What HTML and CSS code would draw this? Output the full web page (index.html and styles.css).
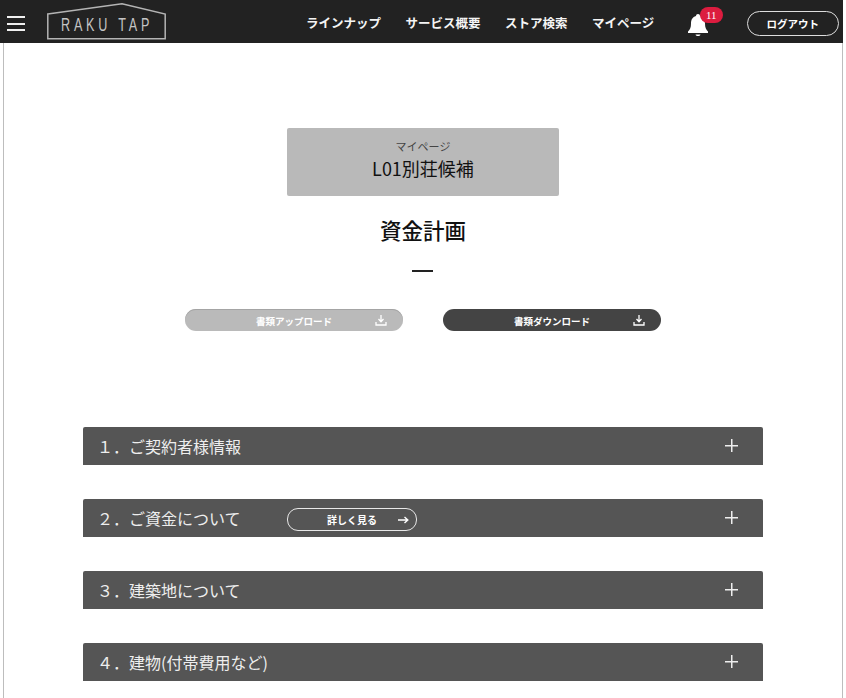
FILE: index.html
```html
<html lang="ja">
    <head>
        <title>資金計画</title>
        <link rel="stylesheet" href="styles.css">
    </head>
    <body>
        <header class="site-header">
            <div class="menu-icon"><span></span><span></span><span></span></div>
            <div class="logo">
                <svg width="119" height="37" viewBox="0 0 119 37">
                    <path d="M0.800 11 L75 0.800 L118.200 11 L118.200 35.800 L0.800 35.800 Z" fill="none" stroke="#b4b4b4" stroke-width="1.500"/>
                </svg>
                <span class="logo-text">RAKU TAP</span>
            </div>
            <nav class="site-nav">
                <a>ラインナップ</a>
                <a>サービス概要</a>
                <a>ストア検索</a>
                <a>マイページ</a>
            </nav>
            <div class="bell">
                <svg width="22" height="24" viewBox="0 0 22 24">
                    <path d="M11 1 C12.200 1 13 1.800 13 3 C16.600 4 18 7 18 10.500 C18 14.500 19 16.500 21 18.500 L21 20 L1 20 L1 18.500 C3 16.500 4 14.500 4 10.500 C4 7 5.400 4 9 3 C9 1.800 9.800 1 11 1 Z" fill="#fff"/>
                    <path d="M8.500 21.500 L13.500 21.500 C13 23.500 9 23.500 8.500 21.500 Z" fill="#fff"/>
                </svg>
                <span class="badge">11</span>
            </div>
            <a class="logout">ログアウト</a>
        </header>

        <main class="page">
            <div class="name-card">
                <p class="name-sub">マイページ</p>
                <p class="name-main">L01別荘候補</p>
            </div>
            <h1 class="page-title">資金計画</h1>
            <div class="title-bar"></div>

            <div class="doc-buttons">
                <a class="doc-btn doc-upload">
                    <span>書類アップロード</span>
                    <svg class="doc-icon" width="12" height="12" viewBox="0 0 12 12">
                        <path d="M6 1 L6 7.500 M3.500 5 L6 7.800 L8.500 5 M1 8 L1 11 L11 11 L11 8" fill="none" stroke="#fff" stroke-width="1.300"/>
                    </svg>
                </a>
                <a class="doc-btn doc-download">
                    <span>書類ダウンロード</span>
                    <svg class="doc-icon" width="12" height="12" viewBox="0 0 12 12">
                        <path d="M6 1 L6 7.500 M3.500 5 L6 7.800 L8.500 5 M1 8 L1 11 L11 11 L11 8" fill="none" stroke="#fff" stroke-width="1.300"/>
                    </svg>
                </a>
            </div>

            <section class="sections">
                <div class="section-bar">
                    <span class="section-title">１．ご契約者様情報</span>
                    <span class="plus"></span>
                </div>
                <div class="section-bar">
                    <span class="section-title section-title-short">２．ご資金について</span>
                    <a class="more-btn">
                        <span>詳しく見る</span>
                        <svg class="more-arrow" width="11" height="8" viewBox="0 0 11 8">
                            <path d="M0 4 L9.500 4 M6.500 1 L9.800 4 L6.500 7" fill="none" stroke="#fff" stroke-width="1.400"/>
                        </svg>
                    </a>
                    <span class="plus"></span>
                </div>
                <div class="section-bar">
                    <span class="section-title">３．建築地について</span>
                    <span class="plus"></span>
                </div>
                <div class="section-bar">
                    <span class="section-title">４．建物(付帯費用など)</span>
                    <span class="plus"></span>
                </div>
            </section>
        </main>
    </body>
</html>
```

FILE: styles.css
```css
html, body {
    height: 698px;
    overflow: hidden;
}

body {
    width: 843px;
    margin: 0;
    background-color: #fff;
    color: #111;
    font-family: "Noto Sans CJK JP", "Noto Sans", sans-serif;
}

p, h1 {
    margin: 0;
}

/* header */
.site-header {
    display: flex;
    align-items: center;
    height: 43px;
    box-sizing: border-box;
    padding-top: 4px;
    background-color: #222;
    color: #fff;
}

.menu-icon {
    display: flex;
    flex-direction: column;
    gap: 4.5px;
    width: 18px;
    margin-left: 7px;
}

.menu-icon span {
    height: 2px;
    background-color: #f0f0f0;
}

.logo {
    position: relative;
    width: 119px;
    height: 37px;
    margin-left: 22px;
    margin-bottom: 4px;
}

.logo-text {
    position: absolute;
    left: 14px;
    top: 12px;
    font-family: "Liberation Sans", sans-serif;
    font-size: 18px;
    line-height: 20px;
    letter-spacing: 5.4px;
    color: #c4c4c4;
    white-space: nowrap;
    transform: scaleX(0.7);
    transform-origin: left center;
}

.site-nav {
    display: flex;
    gap: 24.5px;
    margin-left: 140px;
    margin-bottom: 2px;
    font-size: 12.5px;
    font-weight: 700;
}

.site-nav a {
    color: #f4f4f4;
}

.bell {
    position: relative;
    width: 22px;
    height: 24px;
    margin-left: 32.5px;
    margin-top: 3px;
}

.badge {
    position: absolute;
    left: 13px;
    top: -6px;
    width: 23px;
    height: 16px;
    border-radius: 8px;
    background-color: #dc1c3f;
    color: #fff;
    font-family: "Liberation Serif", serif;
    font-size: 11px;
    line-height: 16px;
    text-align: center;
}

.logout {
    width: 92px;
    height: 25px;
    box-sizing: border-box;
    margin-left: 38px;
    border: 1px solid #ddd;
    border-radius: 13px;
    font-size: 10.5px;
    font-weight: 700;
    line-height: 23px;
    text-align: center;
}

/* page */
.page {
    display: flex;
    flex-direction: column;
    align-items: center;
    width: 838px;
    height: 655px;
    margin-left: 3px;
    border-left: 1px solid #bdbdbd;
    border-right: 1px solid #bdbdbd;
    overflow: hidden;
}

.name-card {
    width: 272px;
    height: 68px;
    margin-top: 85px;
    box-sizing: border-box;
    padding-top: 10px;
    border-radius: 2px;
    background-color: #b9b9b9;
    text-align: center;
}

.name-sub {
    font-size: 11px;
    line-height: 16px;
    color: #444;
}

.name-main {
    margin-top: 2px;
    font-size: 18px;
    line-height: 25px;
    color: #111;
}

.page-title {
    margin-top: 18px;
    font-size: 21.5px;
    font-weight: 500;
    line-height: 32px;
}

.title-bar {
    width: 21px;
    height: 2px;
    margin-top: 24px;
    margin-right: 1px;
    background-color: #222;
}

.doc-buttons {
    display: flex;
    gap: 40px;
    margin-top: 37px;
}

.doc-btn {
    position: relative;
    display: block;
    width: 218px;
    height: 22px;
    border-radius: 11px;
    color: #fff;
    font-size: 9.5px;
    font-weight: 700;
    line-height: 25px;
    text-align: center;
}

.doc-upload {
    background-color: #bababa;
    box-shadow: inset 0 1px #a4a4a4;
}

.doc-download {
    background-color: #444;
}

.doc-icon {
    position: absolute;
    right: 16px;
    top: 5px;
}

.sections {
    display: flex;
    flex-direction: column;
    gap: 34px;
    width: 680px;
    margin-top: 96px;
}

.section-bar {
    position: relative;
    display: flex;
    align-items: center;
    flex-shrink: 0;
    height: 38px;
    box-sizing: border-box;
    padding-left: 14px;
    padding-bottom: 1px;
    border-radius: 2px 2px 0 0;
    background-color: #555;
    color: #eee;
}

.section-title {
    font-size: 16px;
    line-height: 36px;
    white-space: nowrap;
}

.section-title-short {
    width: 190px;
}

.more-btn {
    position: relative;
    width: 128px;
    height: 21px;
    margin-top: 3px;
    border: 1px solid #e8e8e8;
    border-radius: 11px;
    color: #fff;
    font-size: 10px;
    font-weight: 700;
    line-height: 22px;
    text-align: center;
}

.more-arrow {
    position: absolute;
    right: 7px;
    top: 7px;
}

/* plus sign over the right end of the bar */
.plus {
    position: absolute;
    right: 25px;
    top: 12px;
    width: 13px;
    height: 13px;
    background:
        linear-gradient(#eee, #eee) center / 100% 1.5px no-repeat,
        linear-gradient(#eee, #eee) center / 1.5px 100% no-repeat;
}
```
